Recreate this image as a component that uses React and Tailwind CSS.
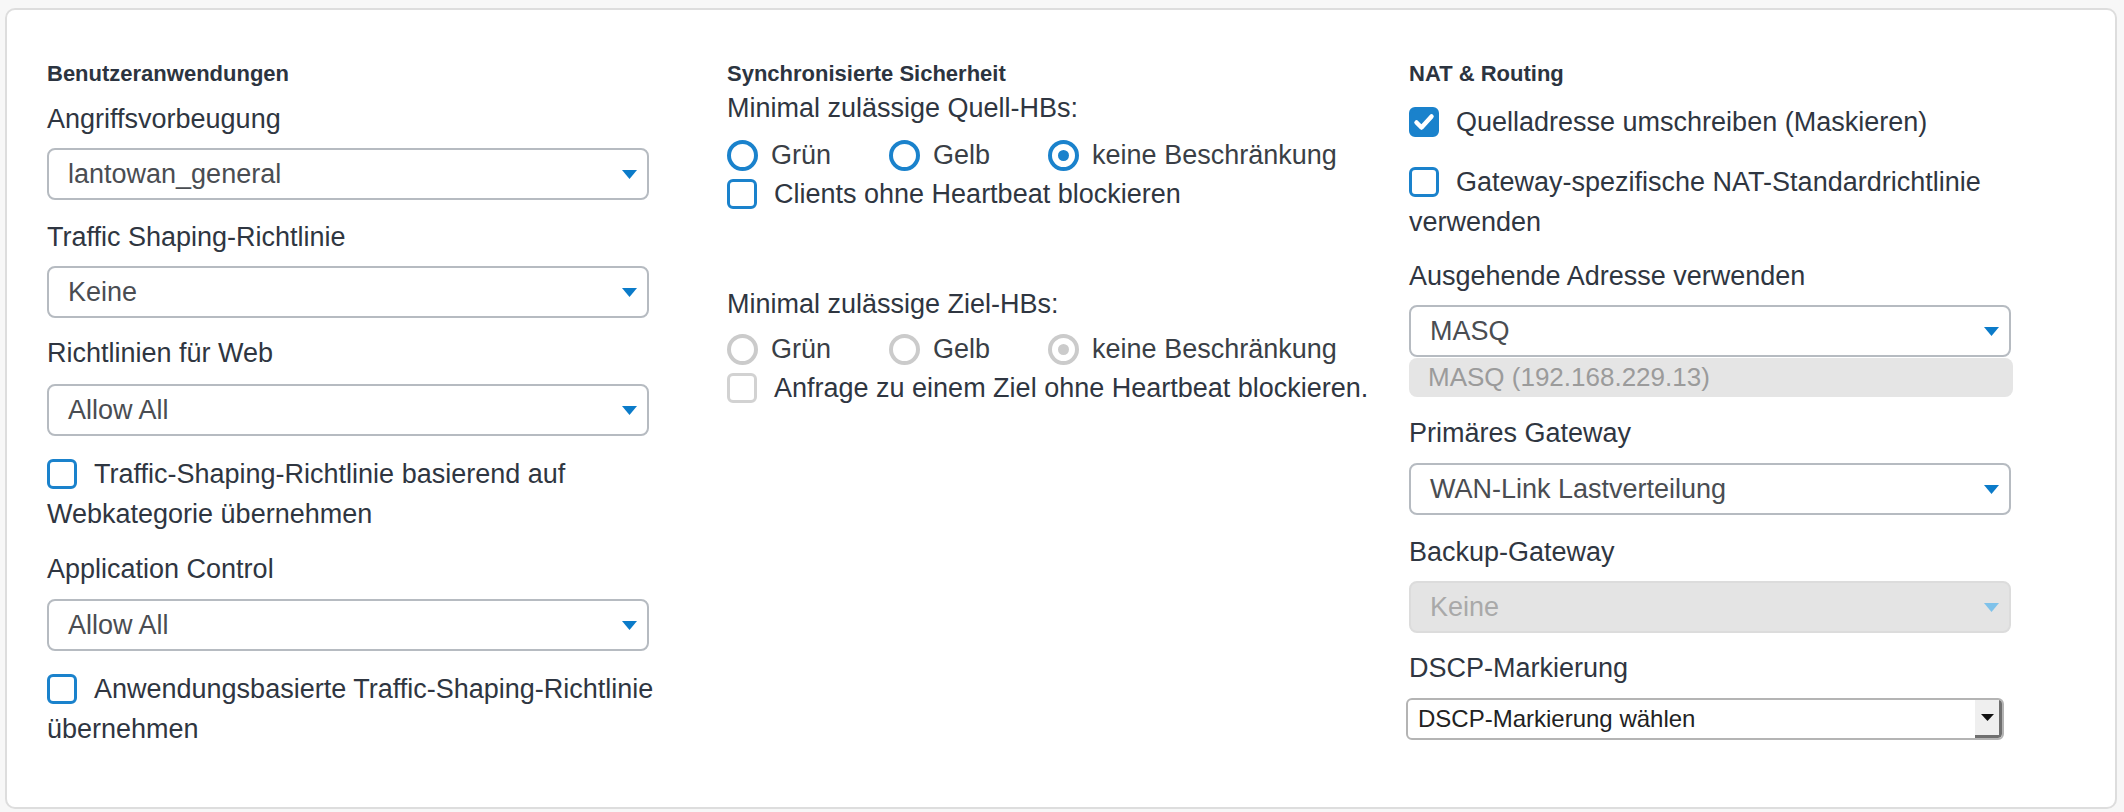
import React from "react";

const font = { fontFamily: '"Liberation Sans", Arial, sans-serif' };

function Heading({ children }) {
  return (
    <h3 className="text-[22px] leading-[28px] font-bold text-[#2c3440]">
      {children}
    </h3>
  );
}

function Label({ children, className = "" }) {
  return (
    <div className={`text-[27px] leading-[40px] text-[#2f3641] ${className}`}>
      {children}
    </div>
  );
}

function Arrow({ color }) {
  return (
    <svg width="15" height="9" viewBox="0 0 15 9" className="shrink-0">
      <path d="M0 0H15L7.5 9Z" fill={color} />
    </svg>
  );
}

function Select({ value, disabled, className = "" }) {
  return (
    <div
      className={`flex items-center justify-between w-[602px] h-[52px] rounded-[8px] border-2 pl-[19px] pr-[10px] ${
        disabled
          ? "bg-[#e4e4e4] border-[#dcdcdc] text-[#a9a9a9]"
          : "bg-white border-[#b6bbc1] text-[#4a4d52]"
      } ${className}`}
    >
      <span className="text-[27px] leading-none">{value}</span>
      <Arrow color={disabled ? "#7fc2ea" : "#0b7bc9"} />
    </div>
  );
}

function Checkbox({ checked, disabled, children, className = "" }) {
  const box = checked
    ? "bg-[#1a82cc] border-[#1a82cc]"
    : disabled
    ? "bg-white border-[#d2d2d2]"
    : "bg-white border-[#1a82cc]";
  return (
    <div className={`w-[660px] text-[27px] leading-[40px] text-[#2f3641] ${className}`}>
      <span
        className={`relative inline-block overflow-hidden w-[30px] h-[30px] rounded-[6px] border-[3px] mr-[17px] align-[-6px] ${box}`}
      >
        {checked && (
          <svg viewBox="0 0 30 30" className="absolute left-[-3px] top-[-3px] w-[30px] h-[30px]">
            <polyline
              points="7.5,15.5 12.5,20.5 22.5,9.5"
              fill="none"
              stroke="#fff"
              strokeWidth="4.5"
              strokeLinecap="round"
              strokeLinejoin="round"
            />
          </svg>
        )}
      </span>
      {children}
    </div>
  );
}

function Radio({ checked, disabled, children }) {
  const ring = disabled ? "border-[#cbcbcb]" : "border-[#1a82cc]";
  const dot = disabled ? "bg-[#cbcbcb]" : "bg-[#1a82cc]";
  return (
    <div className="flex items-center">
      <span
        className={`flex items-center justify-center w-[31px] h-[31px] rounded-full border-4 bg-white ${ring}`}
      >
        {checked && <span className={`w-[11px] h-[11px] rounded-full ${dot}`} />}
      </span>
      <span className="ml-[13px] text-[27px] leading-[38px] text-[#3a3f46]">
        {children}
      </span>
    </div>
  );
}

function RadioRow({ disabled, className = "" }) {
  return (
    <div className={`flex items-center gap-[58px] h-[38px] ${className}`}>
      <Radio disabled={disabled}>Grün</Radio>
      <Radio disabled={disabled}>Gelb</Radio>
      <Radio disabled={disabled} checked>
        keine Beschränkung
      </Radio>
    </div>
  );
}

function DscpSelect({ className = "" }) {
  return (
    <div
      className={`flex items-stretch w-[598px] h-[42px] rounded-[6px] border-2 border-[#b4b4b4] bg-white overflow-hidden ${className}`}
    >
      <span className="flex-1 flex items-center pl-[10px] text-[24px] text-[#222]">
        DSCP-Markierung wählen
      </span>
      <span className="flex items-center justify-center w-[27px] bg-[#efefef] border-r-[3px] border-b-[3px] border-[#6f6f6f] rounded-br-[4px]">
        <svg width="13" height="7" viewBox="0 0 13 7">
          <path d="M0 0H13L6.5 7Z" fill="#111" />
        </svg>
      </span>
    </div>
  );
}

export default function App() {
  return (
    <div style={font} className="w-[2124px] h-[812px] bg-[#f7f7f7] pt-[8px] pl-[5px]">
      <div className="w-[2112px] h-[801px] bg-white border-2 border-[#dddddd] rounded-[10px] pt-[50px] pl-[40px]">
        <div className="grid grid-cols-[680px_682px_1fr]">
          {/* Benutzeranwendungen */}
          <div>
            <Heading>Benutzeranwendungen</Heading>
            <Label className="mt-[11px]">Angriffsvorbeugung</Label>
            <Select value="lantowan_general" className="mt-[9px]" />
            <Label className="mt-[17px]">Traffic Shaping-Richtlinie</Label>
            <Select value="Keine" className="mt-[9px]" />
            <Label className="mt-[15px]">Richtlinien für Web</Label>
            <Select value="Allow All" className="mt-[11px]" />
            <Checkbox className="mt-[18px]">
              Traffic-Shaping-Richtlinie basierend auf Webkategorie übernehmen
            </Checkbox>
            <Label className="mt-[15px]">Application Control</Label>
            <Select value="Allow All" className="mt-[10px]" />
            <Checkbox className="mt-[18px]">
              Anwendungsbasierte Traffic-Shaping-Richtlinie übernehmen
            </Checkbox>
          </div>

          {/* Synchronisierte Sicherheit */}
          <div>
            <Heading>Synchronisierte Sicherheit</Heading>
            <Label>Minimal zulässige Quell-HBs:</Label>
            <RadioRow className="mt-[8px]" />
            <Checkbox className="leading-[38px]">Clients ohne Heartbeat blockieren</Checkbox>
            <Label className="mt-[70px]">Minimal zulässige Ziel-HBs:</Label>
            <RadioRow disabled className="mt-[6px]" />
            <Checkbox disabled className="leading-[38px]">
              Anfrage zu einem Ziel ohne Heartbeat blockieren.
            </Checkbox>
          </div>

          {/* NAT & Routing */}
          <div>
            <Heading>NAT &amp; Routing</Heading>
            <Checkbox checked className="mt-[14px]">
              Quelladresse umschreiben (Maskieren)
            </Checkbox>
            <Checkbox className="mt-[20px]">
              Gateway-spezifische NAT-Standardrichtlinie verwenden
            </Checkbox>
            <Label className="mt-[14px]">Ausgehende Adresse verwenden</Label>
            <Select value="MASQ" className="mt-[9px]" />
            <div className="mt-[1px] w-[604px] h-[39px] rounded-[8px] bg-[#e5e5e5] pl-[19px] flex items-center text-[26px] text-[#9b9b9b]">
              MASQ (192.168.229.13)
            </div>
            <Label className="mt-[16px]">Primäres Gateway</Label>
            <Select value="WAN-Link Lastverteilung" className="mt-[10px]" />
            <Label className="mt-[17px]">Backup-Gateway</Label>
            <Select value="Keine" disabled className="mt-[9px]" />
            <Label className="mt-[15px]">DSCP-Markierung</Label>
            <DscpSelect className="mt-[10px] -ml-[3px]" />
          </div>
        </div>
      </div>
    </div>
  );
}
